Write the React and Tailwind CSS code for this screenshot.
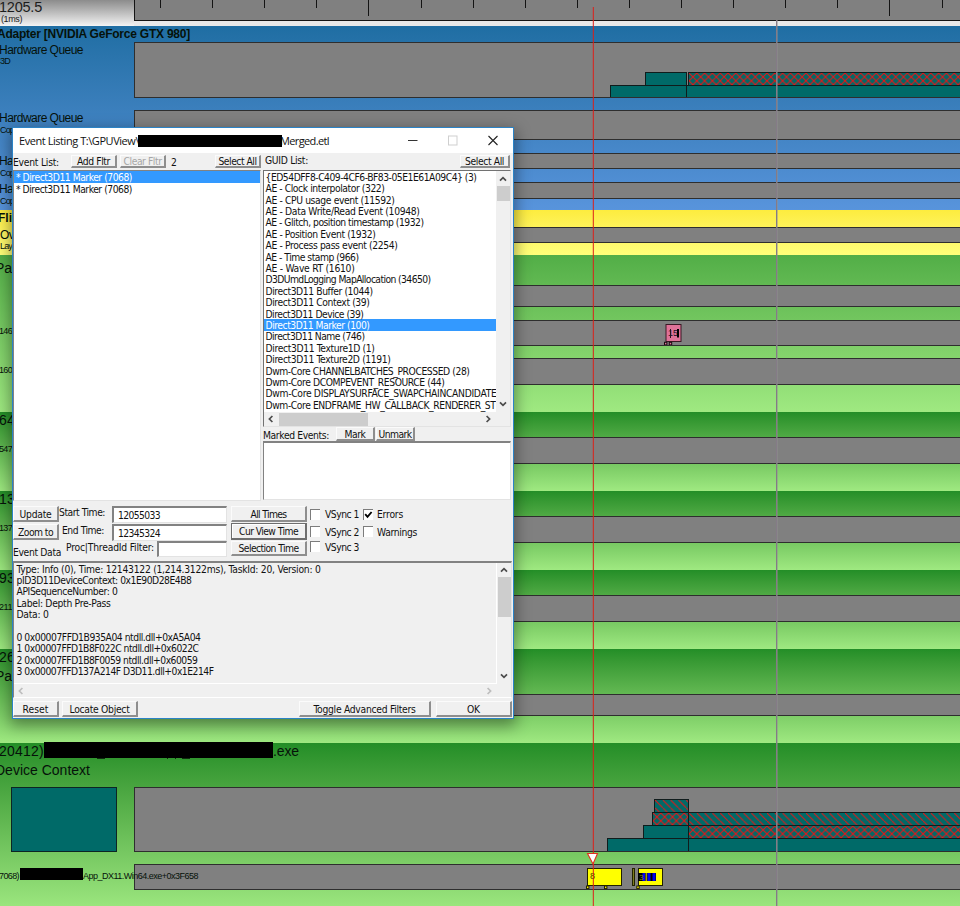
import React, { useLayoutEffect, useRef, useState } from "react";
import clsx from "clsx";

/* Single line of text whose tracking is adjusted so that it spans `w` pixels. */
function Fit({ w, children, className }) {
  const ref = useRef(null);
  const [spacing, setSpacing] = useState(0);
  useLayoutEffect(() => {
    const natural = ref.current.getBoundingClientRect().width;
    setSpacing((w - natural) / String(children).length);
  }, [w, children]);
  return (
    <span ref={ref} className={clsx("inline-block whitespace-pre", className)} style={{ letterSpacing: spacing }}>
      {children}
    </span>
  );
}

/* ---------- timeline ---------- */

function Hatch({ id, cross }) {
  return (
    <svg className="block h-full w-full">
      <defs>
        <pattern id={id} width="7.8" height="7.8" patternUnits="userSpaceOnUse">
          <path d="M-1 -1 L8.8 8.8" stroke="#ec1214" strokeWidth="1.05" />
          {cross && <path d="M8.8 -1 L-1 8.8" stroke="#ec1214" strokeWidth="1.05" />}
        </pattern>
      </defs>
      <rect width="100%" height="100%" fill={`url(#${id})`} />
    </svg>
  );
}

function Bar({ className, hatch, id }) {
  return (
    <div className={clsx("h-[13px] shrink-0 border border-[#101c1c] bg-[#006a68]", className)}>
      {hatch && <Hatch id={id} cross={hatch === "cross"} />}
    </div>
  );
}

function Lane({ className, children }) {
  return (
    <div className={clsx("shrink-0 border-y border-l border-[#2e2e2e] bg-[#808080]", className)}>{children}</div>
  );
}

function Section({ className, labels, children }) {
  return (
    <section className={clsx("flex shrink-0 overflow-hidden", className)}>
      <div className="z-10 flex w-[134px] shrink-0 flex-col items-start text-[#06120a]">
        {labels.map(([text, w, cls], i) => (
          <Fit key={i} w={w} className={cls}>
            {text}
          </Fit>
        ))}
      </div>
      <div className="flex w-[826px] flex-col">{children}</div>
    </section>
  );
}

const TICKS = [26, 78, 130, 182, 234, 287, 339, 391, 443, 495, 547, 599, 651, 703, 755, 808];
const GREEN = "bg-linear-to-b from-[#238e27] to-[#9fe981]";

function Ruler() {
  return (
    <section className="flex h-[26px] shrink-0 bg-linear-to-b from-[#8c8c8c] to-[#f4f4f4]">
      <div className="flex w-[134px] flex-col items-start text-[#1c1c1c]">
        <Fit w={43} className="ml-[-1px] h-[15px] text-[14.5px] leading-[15px]">1205.5</Fit>
        <Fit w={21} className="ml-px h-[9px] text-[9px] leading-[9px]">(1ms)</Fit>
      </div>
      <div className="w-[826px] bg-[#e9e9e9]">
        <div className="h-[21px] border-b border-l border-[#141414] bg-[#808080]">
          <svg className="block h-5 w-full" shapeRendering="crispEdges">
            {TICKS.map((x, i) => (
              <rect key={x} x={x - 1} y="0" width="1" height={i === 4 || i === 14 ? 16 : 8} fill="#141414" />
            ))}
          </svg>
        </div>
      </div>
    </section>
  );
}

function ThreadMarks() {
  return (
    <svg className="block h-full w-full">
      <g stroke="#222200" strokeWidth="1">
        <rect x="452.5" y="3.5" width="34" height="17" fill="#ffff00" />
        <rect x="497.5" y="3.5" width="2" height="17" fill="#7d7d20" />
        <rect x="503.5" y="3.5" width="24" height="17" fill="#ffff00" />
        <rect x="451.5" y="21" width="2.4" height="2.6" fill="#ffee00" />
        <rect x="469.5" y="21" width="2.4" height="2.6" fill="#ffee00" />
        <rect x="501.8" y="21" width="2.4" height="2.6" fill="#ffee00" />
      </g>
      <rect x="503" y="8" width="18" height="8" fill="#000" />
      <rect x="507.5" y="8" width="2.5" height="8" fill="#0000f0" />
      <rect x="512.5" y="8" width="3" height="8" fill="#0000f0" />
      <rect x="517.5" y="8" width="3" height="8" fill="#0000f0" />
      <rect x="510.5" y="8" width="1.6" height="8" fill="#a89c00" />
      <text x="455" y="14" fontSize="9" fill="#3c3c00">8</text>
      <text x="504" y="15" fontSize="8" fill="#8c8200">3</text>
    </svg>
  );
}

function Timeline() {
  return (
    <div className="isolate flex h-full flex-col font-['Liberation_Sans',Arial,sans-serif]">
      <Ruler />
      <Section
        className="h-[184px] bg-linear-to-b from-[#1f6ea3] to-[#5894dc]"
        labels={[
          ["Adapter [NVIDIA GeForce GTX 980]", 193, "ml-[-3px] h-4 text-[12px] font-bold leading-4"],
          ["Hardware Queue", 84, "ml-[-1px] h-4 text-[12px] leading-4"],
          ["3D", 10, "h-[8px] text-[9px] leading-[7px]"],
          ["Hardware Queue", 84, "ml-[-1px] mt-[44px] h-4 text-[12px] leading-4"],
          ["Cop", 14, "h-[8px] text-[9px] leading-[8px]"],
          ["Ha", 14, "ml-[-1px] mt-[19px] h-4 text-[12px] leading-4"],
          ["Cop", 14, "h-[8px] text-[9px] leading-[8px]"],
          ["Ha", 14, "ml-[-1px] mt-[4px] h-4 text-[12px] leading-4"],
          ["Cop", 14, "h-[8px] text-[9px] leading-[8px]"],
        ]}
      >
        <Lane className="mt-4 flex h-14 flex-col justify-end overflow-hidden">
          <div className="flex h-[13px]">
            <Bar className="ml-[510px] w-[42px] border-b-0" />
            <Bar className="ml-px w-[274px] border-b-0" hatch="cross" id="hw3d" />
          </div>
          <div className="flex h-[12px]">
            <Bar className="ml-[475px] w-[77px] border-b-0" />
            <Bar className="-ml-px w-[276px] border-b-0" />
          </div>
        </Lane>
        <Lane className="mt-3 h-[30px]" />
        <Lane className="mt-[13px] h-4" />
        <Lane className="mt-[13px] h-[17px]" />
      </Section>
      <Section
        className="h-[45px] bg-linear-to-b from-[#fdec3e] to-[#ffff7a]"
        labels={[
          ["Fli", 14, "ml-[-2px] h-4 text-[12px] font-bold leading-4"],
          ["Ov", 14, "mt-[1px] h-4 text-[12px] leading-4"],
          ["Lay", 12, "h-[8px] text-[9px] leading-[7px]"],
        ]}
      >
        <Lane className="mt-[17px] h-4" />
      </Section>
      <Section
        className="h-[157px] bg-linear-to-b from-[#52ae47] to-[#9fe981]"
        labels={[
          ["Pa", 17, "ml-[-5px] mt-[5px] h-4 text-[14px] leading-4"],
          ["146", 13, "ml-[-1px] mt-[51px] h-[8px] text-[9px] leading-[8px]"],
          ["160", 13, "ml-[-1px] mt-[31px] h-[8px] text-[9px] leading-[8px]"],
        ]}
      >
        <Lane className="mt-[30px] h-[22px]" />
        <Lane className="mt-[13px] h-[26px]">
          <svg className="block h-full w-full">
            <rect x="531" y="3.5" width="15" height="17" fill="#e07298" stroke="#3a1824" />
            <rect x="529.5" y="21.3" width="2.4" height="2.6" fill="#e07298" stroke="#1c0c12" />
            <rect x="534.3" y="21.3" width="2.4" height="2.6" fill="#e07298" stroke="#1c0c12" />
            <text x="533" y="15" fontSize="9" fill="#1a1020">15</text>
            <rect x="535" y="8" width="1" height="9" fill="#28141e" />
            <rect x="542" y="8" width="2" height="8.5" fill="#000" />
          </svg>
        </Lane>
        <Lane className="mt-3 h-[27px]" />
      </Section>
      {[
        ["64", "547"],
        ["13", "137"],
        ["93", "211"],
      ].map(([pid, tid]) => (
        <Section
          key={pid}
          className={clsx("h-[79px]", GREEN)}
          labels={[
            [pid, 16, "ml-[-1px] h-4 text-[14px] leading-4"],
            [tid, 13, "ml-[-1px] mt-[17px] h-[8px] text-[9px] leading-[8px]"],
          ]}
        >
          <Lane className="mt-[25px] h-[27px]" />
        </Section>
      ))}
      <Section
        className={clsx("h-[94px]", GREEN)}
        labels={[
          ["26", 16, "ml-[-1px] h-4 text-[14px] leading-4"],
          ["Pa", 17, "ml-[-5px] mt-[3px] h-4 text-[14px] leading-4"],
        ]}
      >
        <Lane className="mt-[45px] h-[22px]" />
      </Section>
      <section className={clsx("flex h-[170px] shrink-0 flex-col", GREEN)}>
        <div className="flex h-4 items-start text-[14px] leading-4 text-[#06120a]">
          <Fit w={45} className="ml-[-1px]">20412)</Fit>
          <span className="relative mt-[-1px] h-4 w-[229px] bg-black">
            <span className="absolute left-[53px] top-4 h-px w-2 bg-black/70" />
            <span className="absolute left-[123px] top-4 h-px w-px bg-black/70" />
            <span className="absolute left-[131px] top-4 h-px w-px bg-black/70" />
            <span className="absolute left-[138px] top-4 h-px w-2 bg-black/70" />
          </span>
          <Fit w={26}>.exe</Fit>
        </div>
        <Fit w={95} className="ml-[-5px] mt-[3px] h-4 self-start text-[14px] leading-4 text-[#06120a]">
          Device Context
        </Fit>
        <div className="mt-[9px] flex h-[65px]">
          <div className="ml-[11px] w-[106px] border border-[#0d2524] bg-[#006a68]" />
          <Lane className="ml-[17px] flex w-[826px] flex-col justify-end overflow-hidden">
            <div className="flex h-[13px]">
              <Bar className="ml-[519px] w-[35px] border-b-0" hatch="diag" id="q1" />
            </div>
            <div className="flex h-[13px]">
              <Bar className="ml-[517px] w-[37px] border-b-0" hatch="cross" id="q2" />
              <Bar className="-ml-px w-[274px] border-b-0" hatch="diag" id="q3" />
            </div>
            <div className="flex h-[13px]">
              <Bar className="ml-[508px] w-[46px] border-b-0" />
              <Bar className="-ml-px w-[274px] border-b-0" hatch="cross" id="q4" />
            </div>
            <div className="flex h-[13px]">
              <Bar className="ml-[472px] w-[82px] border-b-0" />
              <Bar className="-ml-px w-[274px] border-b-0" />
            </div>
          </Lane>
        </div>
        <div className="mt-3 flex h-[26px]">
          <div className="z-10 flex w-[134px] shrink-0 items-start pt-[4px] text-[9px] leading-4 text-[#06120a]">
            <Fit w={20} className="ml-[-1px] shrink-0">7068)</Fit>
            <span className="ml-px h-[12px] w-[63px] shrink-0 bg-black" />
            <Fit w={115} className="shrink-0">App_DX11.Win64.exe+0x3F658</Fit>
          </div>
          <Lane className="w-[826px]">
            <ThreadMarks />
          </Lane>
        </div>
      </section>
    </div>
  );
}

/* ---------- dialog ---------- */

function Button({ className, w, disabled, focused, children }) {
  return (
    <div
      className={clsx(
        "flex shrink-0 items-center justify-center border-t border-l border-r-2 border-b-2 bg-[#f0f0f0]",
        focused ? "border-[#6e6e6e] shadow-[inset_1px_1px_0_#fff]" : "border-t-[#fbfbfb] border-l-[#fbfbfb] border-r-[#8e8e8e] border-b-[#8e8e8e]",
        disabled && "text-[#a6a6a6]",
        className
      )}
    >
      <Fit w={w}>{children}</Fit>
    </div>
  );
}

const SUNKEN = "border-t-2 border-l-2 border-r border-b border-t-[#828282] border-l-[#828282] border-r-[#e3e3e3] border-b-[#e3e3e3]";

function Check({ className, checked }) {
  return (
    <div className={clsx("h-[11px] w-[10px] shrink-0 border-t border-l border-[#7c7c7c] bg-white", className)}>
      {checked && (
        <svg viewBox="0 0 9 10" className="block h-[10px] w-[9px]">
          <path d="M1.2 4.2 L3.5 6.8 L7.6 2" fill="none" stroke="#000" strokeWidth="1.9" />
        </svg>
      )}
    </div>
  );
}

function Arrow({ dir, light }) {
  const paths = {
    up: "M1 5.6 L4 2.6 L7 5.6",
    down: "M1 2.4 L4 5.4 L7 2.4",
    left: "M5.4 1 L2.4 4 L5.4 7",
    right: "M2.6 1 L5.6 4 L2.6 7",
  };
  return (
    <svg viewBox="0 0 8 8" className="block size-2 shrink-0">
      <path d={paths[dir]} fill="none" stroke={light ? "#bdbdbd" : "#4c4c4c"} strokeWidth="1.7" />
    </svg>
  );
}

const GUIDS = [
  ["{ED54DFF8-C409-4CF6-BF83-05E1E61A09C4} (3)", 211],
  ["AE - Clock interpolator (322)", 119],
  ["AE - CPU usage event (11592)", 129],
  ["AE - Data Write/Read Event (10948)", 154],
  ["AE - Glitch, position timestamp (1932)", 158],
  ["AE - Position Event (1932)", 110],
  ["AE - Process pass event (2254)", 132],
  ["AE - Time stamp (966)", 93],
  ["AE - Wave RT (1610)", 89],
  ["D3DUmdLogging MapAllocation (34650)", 165],
  ["Direct3D11 Buffer (1044)", 107],
  ["Direct3D11 Context (39)", 104],
  ["Direct3D11 Device (39)", 98],
  ["Direct3D11 Marker (100)", 104],
  ["Direct3D11 Name (746)", 99],
  ["Direct3D11 Texture1D (1)", 109],
  ["Direct3D11 Texture2D (1191)", 125],
  ["Dwm-Core CHANNELBATCHES_PROCESSED (28)", 204],
  ["Dwm-Core DCOMPEVENT_RESOURCE (44)", 179],
  ["Dwm-Core DISPLAYSURFACE_SWAPCHAINCANDIDATE", 231],
  ["Dwm-Core ENDFRAME_HW_CALLBACK_RENDERER_ST", 230],
];

const DETAILS = [
  ["Type: Info (0), Time: 12143122 (1,214.3122ms), TaskId: 20, Version: 0", 304],
  ["pID3D11DeviceContext: 0x1E90D28E4B8", 175],
  ["APISequenceNumber: 0", 101],
  ["Label: Depth Pre-Pass", 94],
  ["Data: 0", 32],
  null,
  ["0 0x00007FFD1B935A04 ntdll.dll+0xA5A04", 184],
  ["1 0x00007FFD1B8F022C ntdll.dll+0x6022C", 182],
  ["2 0x00007FFD1B8F0059 ntdll.dll+0x60059", 181],
  ["3 0x00007FFD137A214F D3D11.dll+0x1E214F", 197],
];

function EventListing() {
  return (
    <div className="absolute left-[12px] top-[127px] flex h-[592px] w-[502px] flex-col border border-[#2b83c6] bg-[#f0f0f0] font-['DejaVu_Sans_Condensed','DejaVu_Sans',sans-serif] text-[10.25px] leading-[12px] text-[#111] shadow-[0_5px_14px_2px_rgba(0,0,0,0.38)]">
      <div className="flex h-[25px] shrink-0 items-center bg-white pl-[6px] pr-[15px] font-['Open_Sans','Noto_Sans',sans-serif] text-[11px]">
        <Fit w={120}>Event Listing T:\GPUView\</Fit>
        <span className="z-10 -ml-px h-[12px] w-[144px] bg-black" />
        <Fit w={49} className="-ml-[2px]">Merged.etl</Fit>
        <svg className="ml-auto block h-[11px] w-[90px]">
          <path d="M0 5.5 H9.5" stroke="#333" />
          <rect x="40.5" y="1" width="8.5" height="9" fill="none" stroke="#cfcfcf" />
          <path d="M80.5 1 L89.5 10 M89.5 1 L80.5 10" stroke="#222" strokeWidth="1.1" />
        </svg>
      </div>

      <div className="flex h-[348px] shrink-0">
        <div className="flex w-[248px] flex-col">
          <div className="flex h-[17px] items-start pt-[2px]">
            <Fit w={46} className="mt-px">Event List:</Fit>
            <Button className="ml-[12px] h-[13px] w-[46px]" w={33}>Add Fltr</Button>
            <Button className="ml-[3px] h-[13px] w-[46px]" w={38} disabled>Clear Fltr</Button>
            <Fit w={6} className="ml-[5px] mt-px">2</Fit>
            <Button className="ml-auto h-[13px] w-[46px]" w={38}>Select All</Button>
          </div>
          <div className="flex-1 border border-[#828282] border-r-[#e3e3e3] border-b-[#e3e3e3] bg-white">
            <div className="flex h-[12px] items-center bg-[#3399ff] pl-[2px] text-white">
              <Fit w={116}>* Direct3D11 Marker (7068)</Fit>
            </div>
            <div className="flex h-[11px] items-center pl-[2px]">
              <Fit w={116}>* Direct3D11 Marker (7068)</Fit>
            </div>
          </div>
        </div>
        <div className="ml-[2px] flex w-[248px] flex-col">
          <div className="flex h-[17px] items-start pt-[2px]">
            <Fit w={43} className="ml-[2px] mt-[-1px]">GUID List:</Fit>
            <Button className="ml-auto mr-px h-[13px] w-[50px]" w={39}>Select All</Button>
          </div>
          <div className="flex h-[257px] flex-col border-t border-l border-b border-r border-[#727272] border-b-[#e3e3e3] border-r-[#e3e3e3] bg-white">
            <div className="flex h-[241px]">
              <div className="w-[232px] overflow-hidden">
                {GUIDS.map(([text, w], i) => (
                  <div
                    key={text}
                    className={clsx("flex h-[11.42px] items-center pl-[1.5px]", i === 13 && "bg-[#3399ff] text-white")}
                  >
                    <Fit w={w}>{text}</Fit>
                  </div>
                ))}
              </div>
              <div className="flex w-[14px] flex-col items-center bg-[#f0f0f0]">
                <div className="flex h-[15px] items-center"><Arrow dir="up" /></div>
                <div className="h-[15px] w-[13px] bg-[#cdcdcd]" />
                <div className="mt-auto flex h-[16px] items-center"><Arrow dir="down" /></div>
              </div>
            </div>
            <div className="flex flex-1 items-center bg-[#f0f0f0] pl-[3px] pr-[18px]">
              <Arrow dir="left" />
              <div className="ml-[4px] h-[13px] w-[89px] bg-[#cdcdcd]" />
              <div className="ml-auto"><Arrow dir="right" /></div>
            </div>
          </div>
          <div className="flex h-[14px] items-start">
            <Fit w={66} className="mt-[2px]">Marked Events:</Fit>
            <Button className="ml-[7px] h-[14px] w-[39px]" w={21}>Mark</Button>
            <Button className="ml-px h-[14px] w-[39px]" w={33}>Unmark</Button>
          </div>
          <div className="h-[59px] border border-t-2 border-[#828282] border-r-[#e3e3e3] border-b-[#e3e3e3] bg-white" />
        </div>
      </div>

      <div className="flex h-[60px] shrink-0 flex-col pt-[4px]">
        <div className="flex h-[18px] items-start">
          <Button className="mt-px h-[16px] w-[46px]" w={32}>Update</Button>
          <Fit w={46} className="mt-px">Start Time:</Fit>
          <div className={clsx("ml-[7px] mt-px flex h-[17px] w-[115px] items-center bg-white pl-[4px]", SUNKEN)}>
            <Fit w={42}>12055033</Fit>
          </div>
          <Button className="ml-[4px] mt-px h-[16px] w-[76px]" w={36}>All Times</Button>
          <Check className="ml-[3px] mt-[4px]" />
          <Fit w={34} className="ml-[5px] mt-[3px]">VSync 1</Fit>
          <Check className="ml-[4px] mt-[4px]" checked />
          <Fit w={26} className="ml-[4px] mt-[3px]">Errors</Fit>
        </div>
        <div className="flex h-[18px] items-start">
          <Button className="mt-px h-[16px] w-[46px]" w={35}>Zoom to</Button>
          <Fit w={42} className="ml-[3px] mt-px">End Time:</Fit>
          <div className={clsx("ml-[8px] mt-px flex h-[17px] w-[115px] items-center bg-white pl-[4px]", SUNKEN)}>
            <Fit w={42}>12345324</Fit>
          </div>
          <Button className="ml-[4px] h-[17px] w-[76px]" w={59} focused>Cur View Time</Button>
          <Check className="ml-[3px] mt-[3px]" />
          <Fit w={34} className="ml-[5px] mt-[3px]">VSync 2</Fit>
          <Check className="ml-[4px] mt-[3px]" />
          <Fit w={40} className="ml-[4px] mt-[3px]">Warnings</Fit>
        </div>
        <div className="flex h-[18px] items-start">
          <Fit w={48} className="mt-[5px]">Event Data</Fit>
          <Fit w={88} className="ml-[5px]">Proc|ThreadId Filter:</Fit>
          <div className={clsx("ml-[3px] h-[16px] w-[70px] bg-white", SUNKEN)} />
          <Button className="ml-[4px] h-[15px] w-[76px]" w={60}>Selection Time</Button>
          <Check className="ml-[3px]" />
          <Fit w={34} className="ml-[5px]">VSync 3</Fit>
        </div>
      </div>

      <div className="flex h-[137px] w-[499px] shrink-0 flex-col border border-t-2 border-[#828282] border-r-[#e3e3e3] border-b-white">
        <div className="flex h-[121px]">
          <div className="w-[483px] border-r border-b border-white pl-[2.5px]">
            {DETAILS.map((line, i) => (
              <div key={i} className="flex h-[11.4px] items-center">
                {line && <Fit w={line[1]}>{line[0]}</Fit>}
              </div>
            ))}
          </div>
          <div className="flex w-[14px] flex-col items-center">
            <div className="flex h-[14px] items-center"><Arrow dir="up" /></div>
            <div className="h-[40px] w-[13px] bg-[#cdcdcd]" />
            <div className="mt-auto flex h-[16px] items-center"><Arrow dir="down" /></div>
          </div>
        </div>
        <div className="flex flex-1 items-center justify-between pl-[3px] pr-[18px]">
          <Arrow dir="left" light />
          <Arrow dir="right" light />
        </div>
      </div>
      <div className="flex items-start pt-[3px]">
        <Button className="h-[16px] w-[46px]" w={26}>Reset</Button>
        <Button className="ml-[3px] h-[16px] w-[76px]" w={60}>Locate Object</Button>
        <Button className="ml-[161px] h-[16px] w-[132px]" w={102}>Toggle Advanced Filters</Button>
        <Button className="ml-[5px] h-[16px] w-[76px]" w={13}>OK</Button>
      </div>
    </div>
  );
}

export default function App() {
  return (
    <div className="relative h-[906px] w-[960px] overflow-hidden bg-[#9fe981]">
      <Timeline />
      <div className="absolute left-[592px] top-[7px] h-[899px] w-px bg-[#e02020]/20" />
      <div className="absolute left-[593px] top-[7px] h-[899px] w-px bg-[#dc1e18]/80" />
      <div className="absolute left-[776px] top-[20px] h-[886px] w-px bg-[#857b87]" />
      <div className="absolute left-[777px] top-[20px] h-[886px] w-px bg-[#909090]/50" />
      <svg className="absolute left-[586px] top-[852px] block h-[14px] w-[14px]">
        <path d="M1.5 1.5 H11.5 L7 12 Z" fill="#fff" stroke="#e0301e" strokeWidth="1.1" />
      </svg>
      <EventListing />
    </div>
  );
}
